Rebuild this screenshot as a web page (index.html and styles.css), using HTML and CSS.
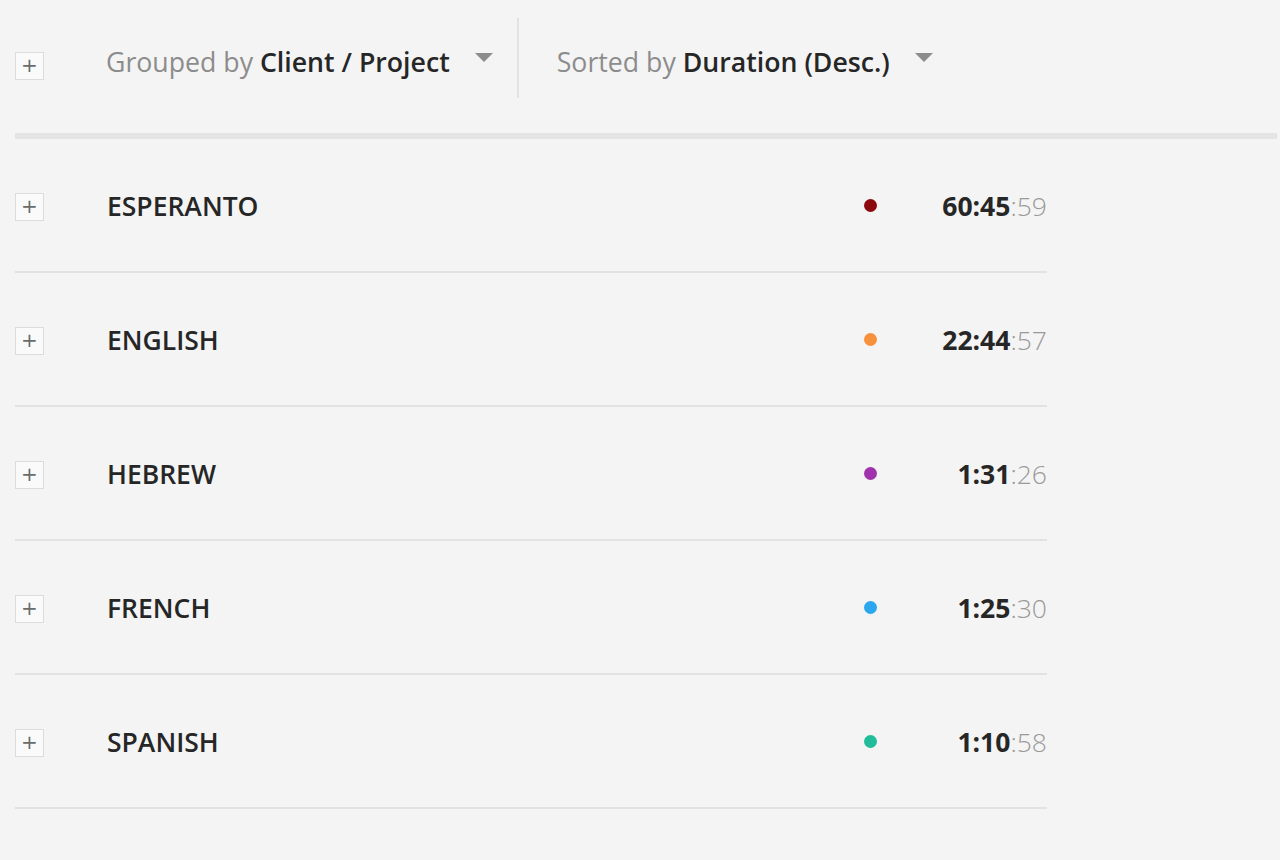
FILE: index.html
```html
<!DOCTYPE html>
<html>
<head>
<meta charset="utf-8">
<link rel="stylesheet" href="styles.css">
</head>
<body>
<div class="page">
  <div class="toolbar">
    <span class="toggle toggle-head">+</span>
    <div class="menu menu-group">
      <span class="label">Grouped by <b>Client / Project</b></span>
      <span class="caret"></span>
    </div>
    <div class="divider"></div>
    <div class="menu menu-sort">
      <span class="label">Sorted by <b>Duration (Desc.)</b></span>
      <span class="caret"></span>
    </div>
  </div>
  <div class="thickbar"></div>
  <div class="rows">
    <div class="row">
      <span class="toggle">+</span>
      <span class="name">ESPERANTO</span>
      <span class="dot" style="background:#8c0a0d"></span>
      <span class="time"><b>60:45</b><span class="sec">:59</span></span>
    </div>
    <div class="row">
      <span class="toggle">+</span>
      <span class="name">ENGLISH</span>
      <span class="dot" style="background:#f7913c"></span>
      <span class="time"><b>22:44</b><span class="sec">:57</span></span>
    </div>
    <div class="row">
      <span class="toggle">+</span>
      <span class="name">HEBREW</span>
      <span class="dot" style="background:#a033ad"></span>
      <span class="time"><b>1:31</b><span class="sec">:26</span></span>
    </div>
    <div class="row">
      <span class="toggle">+</span>
      <span class="name">FRENCH</span>
      <span class="dot" style="background:#2aa7ef"></span>
      <span class="time"><b>1:25</b><span class="sec">:30</span></span>
    </div>
    <div class="row">
      <span class="toggle">+</span>
      <span class="name">SPANISH</span>
      <span class="dot" style="background:#21bd9a"></span>
      <span class="time"><b>1:10</b><span class="sec">:58</span></span>
    </div>
  </div>
</div>
</body>
</html>
```

FILE: styles.css
```css
html, body {
  margin: 0;
  padding: 0;
  background: #f4f4f4;
  font-family: "Open Sans", "Liberation Sans", sans-serif;
  color: #262626;
}

.page {
  padding-left: 15px;
  padding-right: 3px;
}

.toolbar {
  display: flex;
  align-items: center;
  height: 80px;
  padding-top: 18px;
  padding-bottom: 35px;
}

.toggle {
  box-sizing: border-box;
  width: 29px;
  height: 28px;
  border: 1px solid #dcdcdc;
  background: #fafafa;
  color: #6b6b6b;
  font-family: "DejaVu Sans", sans-serif;
  font-size: 20px;
  line-height: 25px;
  text-align: center;
  flex: none;
}

.toggle-head {
  margin-top: 16px;
}

.menu {
  display: flex;
  align-items: center;
  height: 80px;
}

.menu-group {
  margin-left: 62px;
}

.menu-sort {
  margin-left: 38px;
}

.label {
  font-size: 26.7px;
  color: #8c8c8c;
  padding-top: 6px;
  white-space: nowrap;
}

.label b {
  font-weight: 600;
  color: #262626;
}

.caret {
  width: 0;
  height: 0;
  border-left: 9px solid transparent;
  border-right: 9px solid transparent;
  border-top: 9px solid #8c8c8c;
  margin-left: 25px;
  margin-top: -2px;
}

.divider {
  width: 2px;
  height: 80px;
  background: #e3e3e3;
  margin-left: 24px;
}

.thickbar {
  height: 6px;
  background: #e4e4e4;
}

.rows {
  width: 1032px;
}

.row {
  display: flex;
  align-items: center;
  height: 132px;
  border-bottom: 2px solid #e2e2e2;
}

.row .toggle {
  margin-top: 4px;
}

.name {
  margin-left: 63px;
  font-size: 26.5px;
  font-weight: 600;
  color: #262626;
  flex: 1;
  padding-top: 2px;
}

.dot {
  width: 13px;
  height: 13px;
  border-radius: 50%;
  flex: none;
}

.time {
  width: 170px;
  text-align: right;
  font-size: 26.5px;
  flex: none;
  padding-top: 2px;
}

.time b {
  font-weight: 700;
  color: #262626;
}

.sec {
  font-weight: 300;
  color: #9a9a9a;
}
```
